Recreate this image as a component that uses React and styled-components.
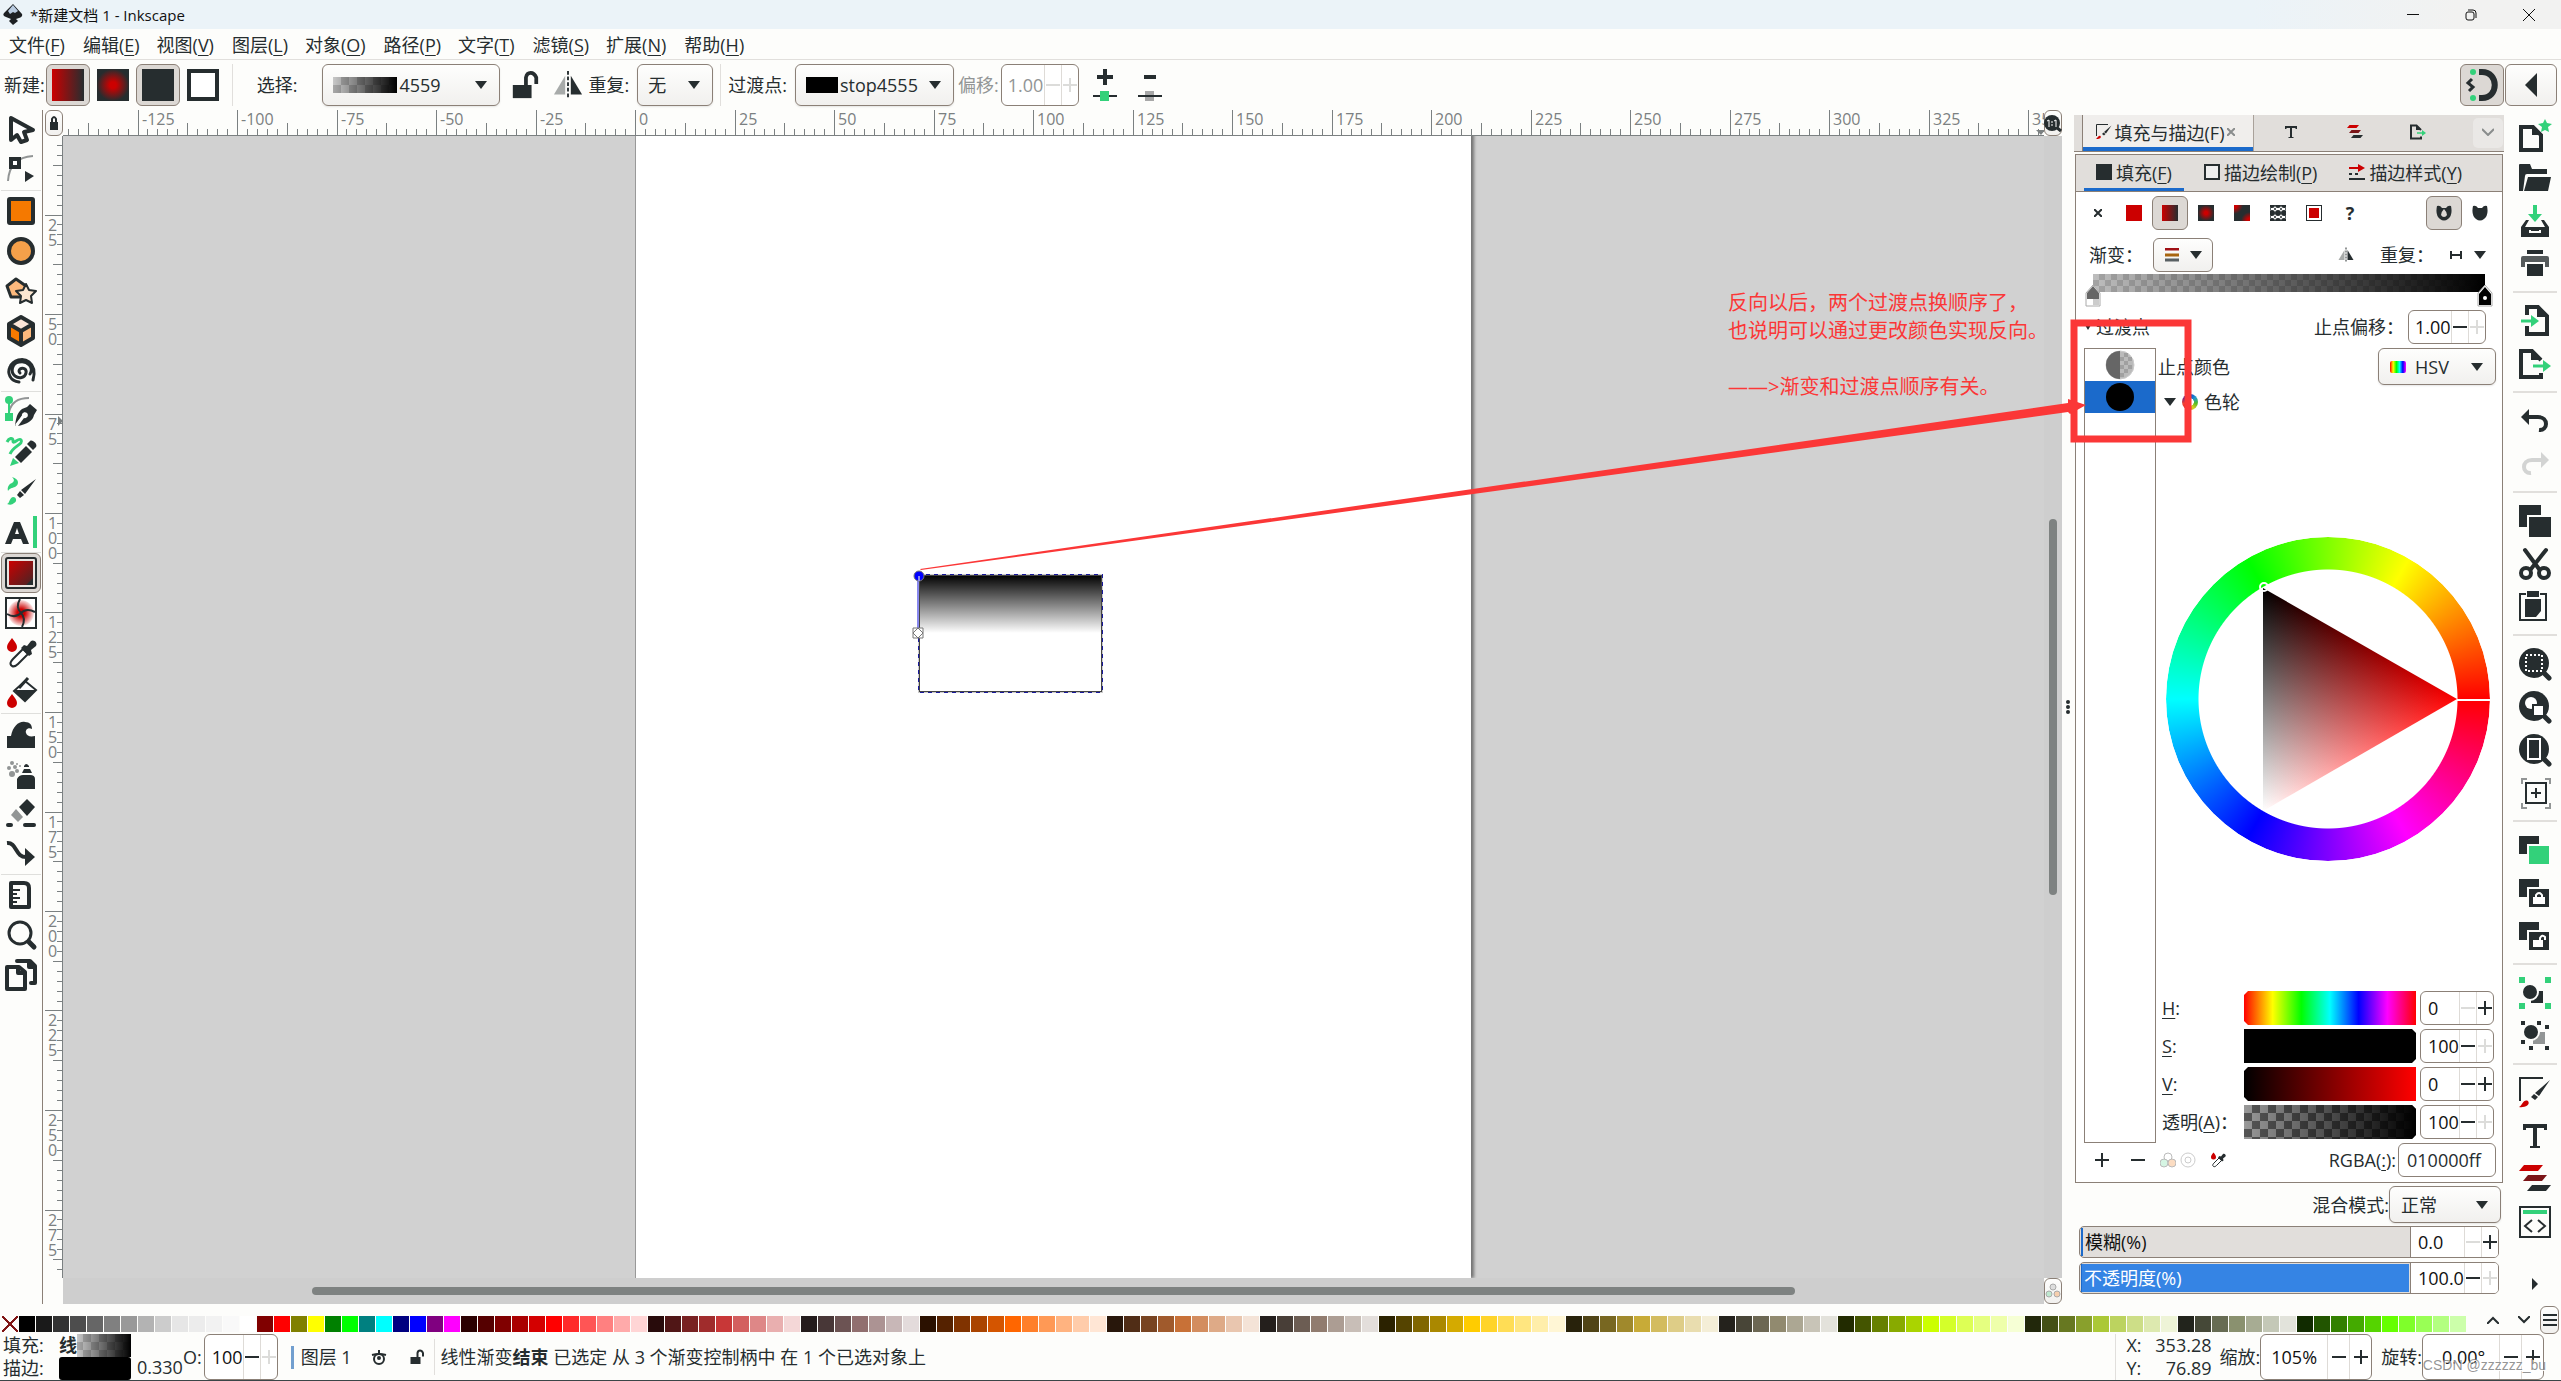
import React from 'react';
import styled, { createGlobalStyle } from 'styled-components';

const ink = '#262d2f';
const line = '#8b8077';
const soft = '#dedbd7';
const green = '#33d17a';
const red = '#cc0000';
const note = '#fb3737';
const blue = '#1b6acb';

const GlobalStyle = createGlobalStyle`
  * { box-sizing: border-box; }
  html, body { margin: 0; padding: 0; }
  body, button, input, select {
    font-family: "Open Sans", "Noto Sans CJK SC", sans-serif;
    font-size: 18px;
    color: ${ink};
  }
  body { background: #fdfdfb; line-height: 24px; overflow: hidden; }
  button { background: none; border: none; padding: 0; }
  u { text-underline-offset: 3px; }
  svg { display: block; flex: none; }
`;

const checker = (a, b, size) => `repeating-conic-gradient(${a} 0 25%, ${b} 0 50%) 0 0 / ${size}px ${size}px`;

/* ---------- icons ---------- */

const s = (w, extra) => ({ fill: 'none', stroke: ink, strokeWidth: w, ...extra });
const drop = <path d="M7 1c3 4 5 6 5 9a5 5 0 0 1-10 0c0-3 2-5 5-9z" fill={red} />;
const lens = (
  <>
    <circle cx="15" cy="15" r="15" fill={ink} />
    <path d="M24 24l6 6" {...s(5, { strokeLinecap: 'round' })} />
  </>
);
const copies = (fill) => (
  <>
    <path d="M0 2h20v8H8v10H0z" fill={ink} />
    <path d="M10 12h20v18H10z" fill={fill} />
  </>
);

const icons = {
  select: <path d="M6 4v22l6-5 4 7 6-2-3-8 9-2z" {...s(4, { fill: '#fff', strokeLinejoin: 'round' })} />,
  node: (
    <>
      <path d="M3 27C4 10 13 3 28 2" {...s(2, { stroke: '#929595' })} />
      <rect x="6" y="5" width="8" height="8" {...s(4, { fill: '#fff' })} />
      <path d="M20 17l9 5-9 6z" fill={ink} />
    </>
  ),
  rect: <rect x="4" y="4" width="24" height="24" rx="1" {...s(4, { fill: '#f57900', strokeLinejoin: 'round' })} />,
  circle: <circle cx="16" cy="16" r="12" {...s(4, { fill: '#f5a04a' })} />,
  star: (
    <>
      <path d="M11 4l10 7-4 11H6L2 11z" {...s(3, { fill: '#fcb97d', strokeLinejoin: 'round' })} />
      <path d="M21 9l3 6 7 1-5 5 1 7-6-3-6 3 1-7-5-5 7-1z" {...s(2, { fill: '#fce6d0', strokeLinejoin: 'round' })} />
    </>
  ),
  cube: (
    <>
      <path d="M16 2l12 7-12 7L4 9z" fill="#fce6d8" />
      <path d="M4 9l12 7v14L4 23z" fill="#f57900" />
      <path d="M28 9l-12 7v14l12-7z" fill="#fcb97d" />
      <path d="M16 2l12 7v14l-12 7-12-7V9zM4 9l12 7 12-7M16 16v14" {...s(4, { strokeLinejoin: 'round' })} />
    </>
  ),
  spiral: <path d="M15 18q-2-2 0-4c3-2 7 0 6 4-1 5-7 6-11 3C5 17 7 8 14 7c9-2 15 6 11 12M14 27C5 26 2 18 5 12 8 5 18 2 24 7c5 4 6 11 4 18" {...s(3, { strokeLinecap: 'round' })} />,
  pen: (
    <>
      <path d="M4 16C6 7 12 2 24 2" {...s(2, { stroke: '#929595' })} />
      <path d="M4 4v18" {...s(2, { stroke: green })} />
      <circle cx="4" cy="4" r="4" fill={green} />
      <rect y="17" width="8" height="8" fill={green} />
      <path fillRule="evenodd" d="M10 30c1-8 2-13 7-17l5-2 3-3 7 6-3 5c-1 6-7 9-16 11l6-8a3 3 0 1 0-2-2z" fill={ink} />
      <path d="M11 29l9-12" {...s(2, { stroke: '#fff' })} />
    </>
  ),
  pencil: (
    <>
      <path d="M2 6c2-4 6-5 6-1s6-4 8-1c3 4-8 6-11 14" {...s(3, { stroke: green })} />
      <path d="M10 21l11-11 6 6-11 11z" fill={ink} />
      <path d="M22 8l3-3c2-2 8 3 6 6l-3 3z" fill={ink} />
      <path d="M8 22l6 5-9 3z" fill={green} />
    </>
  ),
  brush: (
    <>
      <path d="M7 1c8 2 7 8 3 10-3 1-5 1-7 4-1-4 1-7 4-8 3-2 2-4 0-6z" fill={green} />
      <path d="M31 3L20 18l-4-4zM15 15l4 4-4 3-3-3z" fill={ink} />
      <path d="M2 28c3-1 2-6 6-7 4 0 4 5 1 6-2 2-4 2-7 1z" fill={green} />
    </>
  ),
  text: (
    <>
      <path fillRule="evenodd" d="M0 28L9 6h6l9 22h-6l-2-5H8l-2 5zm10-10h4l-2-6z" fill={ink} />
      <path d="M30 0v32" {...s(4, { stroke: green })} />
    </>
  ),
  gradient: (
    <>
      <rect x="1" y="1" width="30" height="30" rx="2" {...s(2, { fill: '#e8e4e0' })} />
      <rect x="4" y="4" width="24" height="24" fill="url(#diag)" />
    </>
  ),
  mesh: (
    <>
      <rect x="1" y="1" width="30" height="30" {...s(2, { fill: '#fff' })} />
      <circle cx="16" cy="16" r="13" fill="url(#meshglow)" />
      <path d="M15 2c-4 7-2 11 1 14s4 8 1 14M2 17c7 4 11 2 14-1s8-4 14-1" {...s(2)} />
    </>
  ),
  dropper: (
    <>
      {drop}
      <path d="M7 29c-3-2-1-5 1-7l10-10 5 5-10 10c-2 2-4 3-6 2z" {...s(2, { fill: '#fff' })} />
      <path d="M16 11l3-3 3 1 4-5c3-2 7 2 5 5l-5 4 1 4-3 2z" fill={ink} />
    </>
  ),
  bucket: (
    <>
      <g transform="translate(0 16)">{drop}</g>
      <path d="M20 4l11 9-11 11L9 14z" {...s(2, { fill: '#fff' })} />
      <path d="M9 13h22L20 24z" fill={ink} />
      <path d="M14 11L23 1" {...s(3)} />
    </>
  ),
  tweak: <path d="M2 30V18h4C8 8 14 3 20 4c5 0 7 3 7 7-4-2-7 1-6 4s4 4 9 3v12z" fill={ink} />,
  spray: (
    <>
      <path d="M12 31V21q2-4 6-4h7q5 0 5 4v10zM17 15l2-4h6l2 4zM19 8q2-4 5 0v1h-5z" fill={ink} />
      <g fill="#929595">
        <circle cx="7" cy="5" r="2" /><circle cx="4" cy="10" r="2" /><circle cx="7" cy="16" r="3" />
        <circle cx="12" cy="6" r="1" /><circle cx="10" cy="9" r="2" /><circle cx="12" cy="13" r="2" /><circle cx="15" cy="8" r="1" />
      </g>
    </>
  ),
  eraser: (
    <>
      <path d="M22 1l8 8-8 9-8-9z" fill={ink} />
      <path d="M11 11l7 8-5 5-7-7z" fill="#929595" />
      <path d="M3 27h3M20 27h9" {...s(4, { strokeLinecap: 'round' })} />
    </>
  ),
  connector: (
    <>
      <path d="M2 5c10-1 8 15 20 14" {...s(4)} />
      <path d="M20 10l10 9-10 9z" fill={ink} />
    </>
  ),
  measure: (
    <>
      <path d="M6 4h13q5 0 5 5v19H6z" {...s(4, { strokeLinejoin: 'round' })} />
      <path d="M8 11h7M8 15h4M8 19h7M8 23h4" {...s(2)} />
    </>
  ),
  zoom: (
    <>
      <circle cx="15" cy="14" r="11" {...s(3)} />
      <path d="M24 23l5 5" {...s(5, { strokeLinecap: 'round' })} />
    </>
  ),
  pages: <path d="M2 8h12l6 5v17H2zM13 8v6h7M12 2h13l5 5v17h-4M24 2v6h6" {...s(4, { strokeLinejoin: 'round', strokeLinecap: 'round' })} />,

  docNew: (
    <>
      <path d="M2 8h12l8 8v15H2z" {...s(4)} />
      <path d="M13 6v10h10z" fill={ink} />
      <path d="M26 0l2 4 5 1-4 3 1 5-4-2-4 2 1-5-4-3 5-1z" fill={green} />
    </>
  ),
  docOpen: <path d="M0 3q0-1 1-1h10l2 5h15v5H8q-2 0-2 2L4 29H0zM9 15h23l-3 14H5z" fill={ink} />,
  save: (
    <>
      <path d="M14 0h4v9h5l-7 8-7-8h5z" fill={green} />
      <path fillRule="evenodd" d="M2 32V22l5-7h3l-4 7h20l-4-7h3l5 7v10zm8-7v3h12v-3h-2v1h-8v-1z" fill={ink} />
    </>
  ),
  print: (
    <>
      <path d="M8 2h16v4H8zM8 16h16v12H8z" fill={ink} />
      <path d="M2 10q0-2 2-2h24q2 0 2 2v9h-4v-5H6v5H2z" fill="#555a5b" />
    </>
  ),
  docImport: (
    <>
      <path d="M8 10V2h11l9 9v18H8v-8" {...s(4)} />
      <path d="M18 2v10h10z" fill={ink} />
      <path d="M2 16h12" {...s(3, { stroke: green })} />
      <path d="M12 10l8 6-8 6z" fill={green} />
    </>
  ),
  docExport: (
    <>
      <path d="M22 12L13 3H2v26h20v-4" {...s(4)} />
      <path d="M12 2v10h11z" fill={ink} />
      <path d="M14 18h12" {...s(3, { stroke: green })} />
      <path d="M24 12l8 6-8 6z" fill={green} />
    </>
  ),
  undo: (
    <>
      <path d="M7 12h12c11 0 10 14 1 13" {...s(4)} />
      <path d="M10 4v16L2 12z" fill={ink} />
    </>
  ),
  redo: (
    <>
      <path d="M25 12H13C2 12 3 26 12 25" {...s(4, { stroke: '#d3d4d3' })} />
      <path d="M22 4v16l8-8z" fill="#d3d4d3" />
    </>
  ),
  copy: <path d="M0 0h22v10H8v12H0zM10 12h22v20H10z" fill={ink} />,
  cut: (
    <>
      <path d="M6 2l14 19M27 2L12 21" {...s(4, { strokeLinecap: 'round' })} />
      <circle cx="7" cy="25" r="5" {...s(4)} />
      <circle cx="25" cy="25" r="5" {...s(4)} />
    </>
  ),
  paste: <path fillRule="evenodd" d="M0 2h7v2H2v24h24V4h-5V2h7v28H0zM8 0h12v6H8zM6 8h16v12l-5 6H6z" fill={ink} />,
  zoomSelection: (
    <>
      {lens}
      <rect x="7" y="7" width="16" height="16" {...s(2, { stroke: '#fff', strokeDasharray: '2 2' })} />
    </>
  ),
  zoomDrawing: (
    <>
      {lens}
      <circle cx="12" cy="12" r="6" fill="#fff" />
      <rect x="13" y="13" width="12" height="12" fill={ink} />
      <rect x="15" y="15" width="9" height="9" fill="#fff" />
    </>
  ),
  zoomPage: (
    <>
      {lens}
      <rect x="9" y="5" width="12" height="20" {...s(2, { stroke: '#fff' })} />
    </>
  ),
  zoomCenter: (
    <>
      <path d="M3 7V2h5M26 2h5v5M31 26v5h-5M8 31H3v-5" {...s(2, { stroke: '#929595' })} />
      <rect x="7" y="6" width="20" height="20" {...s(2)} />
      <path d="M17 11v10M12 16h10" {...s(2)} />
    </>
  ),
  duplicate: copies(green),
  clone: (
    <>
      {copies(ink)}
      <path d="M14 20h12v7H14z" fill="#fff" />
      <path d="M17 21v-3q3-4 6 0v3" {...s(2, { stroke: '#fff' })} />
    </>
  ),
  unlink: (
    <>
      {copies(ink)}
      <path d="M14 20h10v7H14z" fill="#fff" />
      <path d="M21 21v-3q2-4 5-1v3" {...s(2, { stroke: '#fff' })} />
    </>
  ),
  group: (
    <>
      <path d="M0 0h6v6H0zM26 0h6v6h-6zM0 26h6v6H0zM26 26h6v6h-6z" fill={green} />
      <path d="M12 14h12v12H12z" fill={ink} />
      <circle cx="11" cy="15" r="8" fill={ink} stroke="#fdfdfb" strokeWidth="2" />
    </>
  ),
  ungroup: (
    <>
      <path d="M2 1h4v4H2zM18 1h4v4h-4zM26 5h4v4h-4zM2 20h4v4H2zM10 26h4v4h-4zM26 26h4v4h-4z" fill={ink} />
      <path d="M14 12h12v12H14z" fill="#929595" />
      <circle cx="12" cy="12" r="8" fill={ink} stroke="#fdfdfb" strokeWidth="2" />
    </>
  ),
  fillStroke: (
    <>
      <path d="M1 24V1h23" {...s(2)} />
      <path d="M31 3L20 19l-4-3zM15 17l4 3-3 3-4-3z" fill={ink} />
      <path d="M0 30c4-2 4-8 9-6 3 4-4 7-9 6z" fill={red} />
    </>
  ),
  fonts: <path d="M4 4h24v6h-3V8h-7v18h3v2H11v-2h3V8H7v2H4z" fill={ink} />,
  align: (
    <>
      <path d="M5 2h19l-5 6H0z" fill={red} />
      <path d="M9 12h19l-5 6H4z" fill="#7b1518" />
      <path d="M13 22h19l-5 6H8z" fill={ink} />
    </>
  ),
  xml: (
    <>
      <rect x="1" y="1" width="30" height="30" {...s(2)} />
      <path d="M4 4h24v4H4z" fill={green} />
      <path d="M13 14l-7 6 7 6M19 14l7 6-7 6" {...s(2)} />
    </>
  ),
  magnet: (
    <>
      <path d="M13 3h3c17 0 17 26 0 26h-3" {...s(6)} />
      <circle cx="7" cy="3" r="3" fill={green} />
      <circle cx="7" cy="29" r="3" fill={green} />
      <path d="M6 10l-4 4 5 4-4 4" {...s(3)} />
    </>
  ),
  stopAdd: (
    <>
      <path d="M16 0v16M8 8h16" {...s(4)} />
      <path d="M4 27h24" {...s(2)} />
      <path d="M11 22h9v10h-9z" fill={green} />
    </>
  ),
  stopRemove: (
    <>
      <path d="M10 8h12" {...s(4)} />
      <path d="M11 22h9v10h-9z" fill="#a8a8a8" />
      <path d="M4 27h24" {...s(2)} />
    </>
  ),
  unlocked: (
    <>
      <path d="M3 16h20v14H3z" fill={ink} />
      <path d="M17 16V8q1-5 5-5t6 5v7" {...s(4)} />
    </>
  ),
  flip: (
    <>
      <path d="M13 6v20H1z" fill="#a8abaa" />
      <path d="M19 6v20h12z" fill={ink} />
      <path d="M16 1v30" {...s(2, { strokeDasharray: '4 2' })} />
    </>
  ),
};

const Icon = ({ name, size = 32 }) => (
  <svg width={size} height={size} viewBox="0 0 32 32" overflow="visible" aria-hidden="true">{icons[name]}</svg>
);

const Arrow = () => (
  <svg width="12" height="8" viewBox="0 0 12 8" aria-hidden="true"><path d="M0 0h12L6 8z" fill={ink} /></svg>
);

/* ---------- shared controls ---------- */

const Swatch = styled.span`
  flex: none;
  width: ${p => p.$w}px;
  height: ${p => p.$h}px;
  background: ${p => p.$bg};
  border: ${p => p.$border || 'none'};
  border-radius: ${p => p.$radius || 0};
`;

const SelectBox = styled.span`
  display: flex;
  align-items: center;
  flex: none;
  width: ${p => p.$w}px;
  height: ${p => p.$h || 42}px;
  padding: 0 12px 0 ${p => p.$pad || 10}px;
  gap: ${p => p.$gap || 2}px;
  border: 1px solid ${line};
  border-radius: 6px;
  background: linear-gradient(#fefefd, #f1f0ee);
  box-shadow: 0 1px 2px rgba(0, 0, 0, 0.1);

  select {
    flex: 1;
    min-width: 0;
    height: 26px;
    padding: 0;
    appearance: none;
    border: none;
    background: none;
  }
`;

const Choice = ({ id, label, value, w, h, pad, gap, children }) => (
  <SelectBox $w={w} $h={h} $pad={pad} $gap={gap}>
    {children}
    <select id={id} aria-label={label} defaultValue={value}>
      <option>{value}</option>
    </select>
    <Arrow />
  </SelectBox>
);

const SpinBox = styled.span`
  display: flex;
  flex: none;
  width: ${p => p.$w}px;
  height: ${p => p.$h || 34}px;
  border: ${p => (p.$bare ? 'none' : `1px solid ${line}`)};
  border-left: ${p => (p.$bare ? `1px solid ${line}` : '')};
  border-radius: ${p => (p.$bare ? 0 : 6)}px;
  background: #fff;

  input {
    flex: 1;
    min-width: 0;
    width: 0;
    padding: 0 0 0 ${p => p.$pad || 6}px;
    border: none;
    background: none;
    color: ${p => (p.$off ? '#929595' : '#111')};
  }
`;

const Step = styled.button`
  flex: none;
  width: ${p => p.$w || 17}px;
  border-left: 1px solid ${soft};
  display: flex;
  align-items: center;
  justify-content: center;
`;

const Spin = ({ id, label, value, w, h, pad, step, off, low, high, bare }) => (
  <SpinBox $w={w} $h={h} $pad={pad} $off={off} $bare={bare}>
    <input id={id} aria-label={label} defaultValue={value} disabled={off} />
    <Step $w={step} aria-label="减少">
      <svg width="14" height="14"><path d="M0 7h14" stroke={off || low ? '#dcdcda' : ink} strokeWidth="2" /></svg>
    </Step>
    <Step $w={step} aria-label="增加">
      <svg width="14" height="14"><path d="M0 7h14M7 0v14" stroke={off || high ? '#dcdcda' : ink} strokeWidth="2" /></svg>
    </Step>
  </SpinBox>
);

const Tool = styled.button`
  flex: none;
  display: flex;
  align-items: center;
  justify-content: center;
  width: ${p => p.$w}px;
  height: ${p => p.$h}px;
  border: 1px solid ${p => (p.$on || p.$framed ? line : 'transparent')};
  border-radius: 6px;
  background: ${p => (p.$on ? '#dcd8d4' : p.$framed ? 'linear-gradient(#fefefd, #f1f0ee)' : 'none')};
`;

const Spacer = styled.span`
  flex: 1;
`;

const Gap = styled.span`
  flex: none;
  width: ${p => p.$w}px;
`;

const VLine = styled.span`
  flex: none;
  align-self: stretch;
  width: 1px;
  margin: ${p => p.$m || '4px 0'};
  background: #e1dfdc;
`;

/* ---------- window frame ---------- */

const Window = styled.div`
  position: relative;
  display: flex;
  flex-direction: column;
  min-height: 100vh;
  border-bottom: 1px solid #3a4547;
`;

const TitleBar = styled.header`
  display: flex;
  align-items: center;
  height: 29px;
  padding: 0 3px;
  background: linear-gradient(90deg, #ebf3f8, #ebf3f8 88%, #f2f2f1 96%);
  font-size: 15px;
  color: #111;
`;

const WindowButton = styled.button`
  width: 58px;
  height: 29px;
  display: flex;
  align-items: center;
  justify-content: center;
`;

const MenuBar = styled.nav`
  display: flex;
  height: 31px;
  padding-left: 1px;
  border-bottom: 1px solid #e1dfdc;

  button {
    padding: 0 9px 0 8px;
    white-space: nowrap;
  }

  button:nth-child(even) {
    padding-left: 9px;
  }
`;

const ToolControls = styled.div`
  display: flex;
  align-items: center;
  height: 50px;
  padding: 0 4px;
  white-space: nowrap;

  label[data-off='true'] {
    color: #929595;
  }
`;

const Main = styled.div`
  display: flex;
  flex: 1;
  min-height: 0;
`;

const menus = [
  ['文件', 'F'], ['编辑', 'E'], ['视图', 'V'], ['图层', 'L'], ['对象', 'O'],
  ['路径', 'P'], ['文字', 'T'], ['滤镜', 'S'], ['扩展', 'N'], ['帮助', 'H'],
];

const Title = () => (
  <TitleBar>
    <svg width="20" height="22" viewBox="0 0 20 22" aria-hidden="true">
      <path d="M10 0l9 10q1 3-3 4l-3 1 2 2-5 4-4-4 2-2-5-2q-4-1-2-4z" fill="#1d2023" />
      <path d="M10 1l5 6-3 2-2-1-3 2-2-3z" fill="#b9cbe0" />
    </svg>
    <Gap $w={7} />
    *新建文档 1 - Inkscape
    <Spacer />
    <WindowButton aria-label="最小化">
      <svg width="12" height="12"><path d="M0 5h12v1H0z" fill="#111" /></svg>
    </WindowButton>
    <WindowButton aria-label="还原">
      <svg width="12" height="12" fill="none" stroke="#111"><rect x="1" y="3" width="8" height="8" rx="2" /><path d="M3 1h5q3 0 3 3v5" /></svg>
    </WindowButton>
    <WindowButton aria-label="关闭">
      <svg width="12" height="12"><path d="M0 0l12 12M12 0L0 12" stroke="#111" /></svg>
    </WindowButton>
  </TitleBar>
);

const thinChecker = checker('#a8a8a8', '#c8c8c8', 16);

const Controls = () => (
  <ToolControls>
    <span>新建:</span>
    <Gap $w={1} />
    <Tool $w={44} $h={42} $on aria-label="线性渐变"><Swatch $w={32} $h={32} $bg={`linear-gradient(90deg, ${red}, ${ink})`} /></Tool>
    <Gap $w={1} />
    <Tool $w={44} $h={42} aria-label="径向渐变"><Swatch $w={32} $h={32} $bg={`radial-gradient(closest-side, ${red} 20%, ${ink})`} /></Tool>
    <Gap $w={1} />
    <Tool $w={44} $h={42} $on aria-label="填充"><Swatch $w={32} $h={32} $bg={ink} /></Tool>
    <Gap $w={1} />
    <Tool $w={44} $h={42} aria-label="描边"><Swatch $w={32} $h={32} $bg="#fff" $border={`4px solid ${ink}`} /></Tool>
    <Gap $w={7} />
    <VLine />
    <Gap $w={24} />
    <label htmlFor="grad">选择:</label>
    <Gap $w={25} />
    <Choice id="grad" value="4559" w={178}>
      <Swatch $w={64} $h={16} $bg={`linear-gradient(90deg, transparent, #000), ${thinChecker}`} />
    </Choice>
    <Gap $w={10} />
    <Tool $w={30} $h={42} aria-label="锁定"><Icon name="unlocked" size={30} /></Tool>
    <Gap $w={12} />
    <Tool $w={32} $h={42} aria-label="反向"><Icon name="flip" size={30} /></Tool>
    <Gap $w={4} />
    <label htmlFor="repeat">重复:</label>
    <Gap $w={8} />
    <Choice id="repeat" value="无" w={76} />
    <Gap $w={7} />
    <VLine />
    <Gap $w={7} />
    <label htmlFor="stops">过渡点:</label>
    <Gap $w={8} />
    <Choice id="stops" value="stop4555" w={159}>
      <Swatch $w={32} $h={16} $bg="#000" />
    </Choice>
    <Gap $w={4} />
    <label htmlFor="offset" data-off="true">偏移:</label>
    <Gap $w={2} />
    <Spin id="offset" value="1.00" w={78} h={42} off />
    <Gap $w={7} />
    <Tool $w={38} $h={42} aria-label="插入过渡点"><Icon name="stopAdd" /></Tool>
    <Gap $w={7} />
    <Tool $w={38} $h={42} aria-label="删除过渡点"><Icon name="stopRemove" /></Tool>
    <Spacer />
    <Tool $w={44} $h={42} $on aria-label="吸附"><Icon name="magnet" /></Tool>
    <Gap $w={1} />
    <Tool $w={52} $h={42} $framed aria-label="收起">
      <svg width="12" height="24"><path d="M12 0v24L0 12z" fill={ink} /></svg>
    </Tool>
  </ToolControls>
);

/* ---------- toolbox and command bar ---------- */

const Toolbox = styled.aside`
  flex: none;
  width: 43px;
  padding: 0 1px;
  border-right: 1px solid ${line};
`;

const Rule = styled.hr`
  height: 1px;
  margin: 0;
  border: none;
  background: #dfdfdc;
`;

const toolGroups = [
  ['select', 'node'],
  ['rect', 'circle', 'star', 'cube', 'spiral'],
  ['pen', 'pencil', 'brush', 'text'],
  ['gradient', 'mesh', 'dropper', 'bucket'],
  ['tweak', 'spray', 'eraser', 'connector'],
  ['measure', 'zoom', 'pages'],
];

const Commands = styled.aside`
  flex: none;
  width: 57px;
  display: flex;
  flex-direction: column;
  padding: 3px 4px 12px 9px;
`;

const commandGroups = [
  ['docNew', 'docOpen', 'save', 'print'],
  ['docImport', 'docExport'],
  ['undo', 'redo'],
  ['copy', 'cut', 'paste'],
  ['zoomSelection', 'zoomDrawing', 'zoomPage', 'zoomCenter'],
  ['duplicate', 'clone', 'unlink'],
  ['group', 'ungroup'],
  ['fillStroke', 'fonts', 'align', 'xml'],
];

const CommandRule = styled.hr`
  flex: none;
  width: 100%;
  height: 2px;
  margin: 6px 0;
  border: none;
  background: #e1dfdc;
`;

/* ---------- canvas ---------- */

const CanvasArea = styled.main`
  flex: 1;
  min-width: 0;
  margin-left: 2px;
  display: grid;
  grid-template-columns: 18px 1fr 18px;
  grid-template-rows: 26px 1fr 26px;
`;

const CornerButton = styled.button`
  display: flex;
  align-items: center;
  justify-content: center;
  border: 1px solid ${line};
  border-radius: 6px;
  background: linear-gradient(#fefefd, #f1f0ee);
`;

const RulerBox = styled.div`
  overflow-x: clip;
  overflow-y: visible;
  min-height: 0;

  svg { font-size: 16px; fill: #7b8081; overflow: visible; }
`;

const Desk = styled.div`
  position: relative;
  overflow: hidden;
  background: #d1d1d1;
`;

const Page = styled.div`
  position: absolute;
  left: 572px;
  top: -21px;
  width: 836px;
  bottom: 0;
  background: #fff;
  border-left: 1px solid #999;
  box-shadow: 3px 0 3px rgba(0, 0, 0, 0.45);
`;

const Shape = styled.svg`
  position: absolute;
  left: 849px;
  top: 432px;
`;

const Remark = styled.p`
  position: absolute;
  right: 8px;
  top: 153px;
  width: 308px;
  margin: 0;
  font-size: 20px;
  line-height: 28px;
  color: ${note};
  white-space: pre;
`;

const Track = styled.div`
  display: flex;
  flex-direction: ${p => (p.$down ? 'column' : 'row')};
  align-items: center;
  background: #cecece;
`;

const Thumb = styled.div`
  flex: ${p => p.$size} 0 0;
  align-self: center;
  width: ${p => (p.$down ? '8px' : 'auto')};
  height: ${p => (p.$down ? 'auto' : '8px')};
  border-radius: 4px;
  background: #7e8281;
`;

const Rest = styled.div`
  flex: ${p => p.$size} 0 0;
`;

const STEP = 9.95;

const HRuler = () => {
  const ticks = [];
  for (let i = -57; i < 142; i++) ticks.push(i);
  return (
    <RulerBox>
      <svg width="1981" height="26">
        {ticks.map(i => {
          const x = Math.round(572 + i * STEP);
          const h = i % 10 === 0 ? 26 : i % 5 === 0 ? 13 : 7;
          return <rect key={i} x={x} y={26 - h} width="1" height={h} />;
        })}
        {ticks.filter(i => i % 10 === 0).map(i => (
          <text key={i} x={Math.round(572 + i * STEP) + 4} y="15">{i * 2.5}</text>
        ))}
        <rect y="25" width="1981" height="1" />
        <path d="M1973 20h9l-4 5z" />
      </svg>
    </RulerBox>
  );
};

const VRuler = () => {
  const ticks = [];
  for (let i = 3; i < 117; i++) ticks.push(i);
  return (
    <RulerBox>
      <svg width="18" height="1142">
        {ticks.map(i => {
          const y = Math.round(i * STEP - 21);
          const w = i % 10 === 0 ? 18 : i % 5 === 0 ? 10 : 6;
          return <rect key={i} x={18 - w} y={y} width={w} height="1" />;
        })}
        {ticks.filter(i => i % 10 === 0).map(i => (
          <text key={i}>
            {String(i * 2.5).split('').map((c, n) => (
              <tspan key={n} x="3" y={Math.round(i * STEP - 21) + 16 + n * 15}>{c}</tspan>
            ))}
          </text>
        ))}
        <rect x="17" width="1" height="1142" />
        <path d="M13 280l5 5-5 5z" />
      </svg>
    </RulerBox>
  );
};

const Canvas = () => (
  <CanvasArea>
    <CornerButton aria-label="锁定参考线">
      <svg width="8" height="14" viewBox="0 0 8 14"><path d="M0 6h8v8H0z" fill={ink} /><path d="M2 7V3q2-4 4 0v4" fill="none" stroke={ink} strokeWidth="2" /></svg>
    </CornerButton>
    <HRuler />
    <CornerButton aria-label="缩放 1:1">
      <svg width="16" height="16" viewBox="0 0 16 16" overflow="visible">
        <circle cx="7" cy="8" r="8" fill={ink} />
        <path d="M11 12l5 4" stroke={ink} strokeWidth="3" />
        <path d="M2 6l2-1v7M9 6l2-1v7M7 6v2M7 9v2" fill="none" stroke="#fff" />
      </svg>
    </CornerButton>
    <VRuler />
    <Desk>
      <Page />
      <Shape width="200" height="136" viewBox="0 0 200 136" shapeRendering="crispEdges">
        <rect x="7" y="7" width="182" height="116" fill="url(#fade)" stroke="#444" />
        <path d="M6 6h184v118H6z" fill="none" stroke="#ccc" />
        <path d="M6 6h184v118H6z" fill="none" stroke="#1a1a9c" strokeDasharray="4 4" />
        <path d="M6 8v56" stroke="#8888ee" strokeWidth="2" />
        <g shapeRendering="auto">
          <circle cx="7" cy="8" r="5" fill="#00f" stroke="#777" />
          <path d="M7 8v5" stroke="#8888ee" strokeWidth="2" />
          <path d="M1 60h10v10H1zM6 60l5 5-5 5-5-5z" fill="#fff" stroke="#777" />
        </g>
      </Shape>
      <Remark>{'反向以后，两个过渡点换顺序了，\n也说明可以通过更改颜色实现反向。\n\n——>渐变和过渡点顺序有关。'}</Remark>
    </Desk>
    <Track $down>
      <Rest $size={383} />
      <Thumb $down $size={376} />
      <Rest $size={383} />
    </Track>
    <span />
    <Track>
      <Rest $size={249} />
      <Thumb $size={1482} />
      <Rest $size={249} />
    </Track>
    <CornerButton aria-label="色彩管理">
      <svg width="16" height="16" fill="#ddd" stroke="#aaa"><circle cx="8" cy="4" r="3" /><circle cx="4" cy="11" r="3" fill="#bfe8cf" /><circle cx="12" cy="11" r="3" fill="#f6cfae" /></svg>
    </CornerButton>
  </CanvasArea>
);

/* ---------- dock ---------- */

const Grip = styled.div`
  flex: none;
  width: 12px;
  display: flex;
  align-items: center;
  justify-content: center;
`;

const Dock = styled.section`
  flex: none;
  width: 430px;
  display: flex;
  flex-direction: column;
  padding: 5px 0 10px;
`;

const DockTabs = styled.div`
  display: flex;
  height: 37px;
  padding-left: 8px;
  background: #e1dedb;
  border-bottom: 1px solid ${line};
`;

const DockTab = styled.button`
  display: flex;
  align-items: center;
  justify-content: center;
  gap: 3px;
  width: ${p => p.$w}px;
  padding-bottom: 2px;
  ${p => p.$on && `
    background: #f0eeec;
    border-left: 1px solid ${line};
    border-right: 1px solid #a9a19a;
    box-shadow: inset 0 -4px ${blue};
  `}
  ${p => p.$pale && `
    height: 30px;
    margin: 3px 1px 0 0;
    border-radius: 5px;
    background: #eae8e6;
  `}
`;

const Panel = styled.div`
  flex: 1;
  display: flex;
  flex-direction: column;
  margin: 2px 1px 0;
  padding-bottom: 5px;
  border: 1px solid ${line};
  background: #fff;
`;

const SubTabs = styled.div`
  display: flex;
  gap: 8px;
  height: 37px;
  padding-left: 8px;
  background: #e1dedb;
  border-bottom: 1px solid ${line};
`;

const SubTab = styled.button`
  display: flex;
  align-items: center;
  gap: 4px;
  padding: 0 12px 2px;
  white-space: nowrap;
  box-shadow: ${p => (p.$on ? `inset 0 -3px ${blue}` : 'none')};
`;

const Row = styled.div`
  display: flex;
  align-items: center;
  flex: none;
  height: ${p => p.$h || 34}px;
  margin-top: ${p => p.$mt || 0}px;
  padding: ${p => p.$pad || 0};
  white-space: nowrap;
`;

const GradientBar = styled.div`
  position: relative;
  flex: none;
  height: 18px;
  margin: 2px 17px 18px;
  background: linear-gradient(90deg, rgba(128, 128, 128, 0.15), #000), ${checker('#aaa', '#c8c8c8', 12)};
`;

const StopHandle = styled.svg`
  position: absolute;
  top: 10px;
  left: ${p => p.$at};
  margin-left: -8px;
`;

const Editor = styled.div`
  flex: 1;
  display: grid;
  grid-template-columns: 72px 1fr;
  gap: 2px;
  margin-top: 4px;
  padding: 0 6px 0 8px;
`;

const StopList = styled.ul`
  margin: 0;
  padding: 0;
  list-style: none;
  border: 1px solid ${line};
`;

const Stop = styled.li`
  display: flex;
  align-items: center;
  justify-content: center;
  height: 32px;
  background: ${p => (p.$on ? blue : 'none')};
`;

const Column = styled.div`
  display: flex;
  flex-direction: column;
`;

const WheelArea = styled.div`
  flex: 1;
  display: flex;
  align-items: center;
  justify-content: center;
  padding-left: 2px;
`;

/* the mask puts the ring in its own stacking context, so the svg needs one too */
const Wheel = styled.div`
  display: grid;
  width: 324px;
  height: 324px;

  > * { grid-area: 1 / 1; }
  > svg { z-index: 1; }
`;

const Ring = styled.div`
  border-radius: 50%;
  background: conic-gradient(from 90deg, red, magenta, blue, cyan, lime, yellow, red);
  mask: radial-gradient(closest-side, transparent 129px, #000 130px);
`;

const Triangle = styled.g`
  isolation: isolate;

  rect + rect { mix-blend-mode: plus-lighter; }
`;

const Sliders = styled.div`
  display: grid;
  grid-template-columns: 82px 1fr 74px;
  gap: 4px;
  align-items: center;
  margin: 10px 2px 4px 0;
  white-space: nowrap;

  label { padding-left: 4px; }
`;

const Slider = styled.input`
  width: 100%;
  height: 34px;
  margin: 0;
  appearance: none;
  background: ${p => p.$bg};
  clip-path: ${p => (p.$end
    ? 'polygon(0 0, calc(100% - 4px) 0, 100% 4px, 100% 30px, calc(100% - 4px) 100%, 0 100%)'
    : 'polygon(4px 0, 100% 0, 100% 100%, 4px 100%, 0 30px, 0 4px)')};

  &::-webkit-slider-thumb {
    appearance: none;
    width: 1px;
    height: 34px;
  }
`;

const Entry = styled.input`
  width: 98px;
  height: 34px;
  padding: 0 0 0 8px;
  border: 1px solid ${line};
  border-radius: 6px;
  background: #fff;
`;

const Scale = styled.div`
  display: flex;
  height: 32px;
  margin: ${p => p.$mt}px 5px 0;
  border: 1px solid ${line};
  border-radius: 5px;
  background: #e1dedb;
  overflow: hidden;

  label {
    flex: 1;
    display: flex;
    align-items: center;
    margin: 1px;
    padding-left: 2px;
    border-left: ${p => (p.$full ? 1 : 2)}px solid ${blue};
    background: ${p => (p.$full ? '#3584e4' : 'none')};
    color: ${p => (p.$full ? '#fff' : '#111')};
  }
`;

const sliders = [
  { id: 'hue', label: <><u>H</u>:</>, bg: 'linear-gradient(90deg, red, yellow, lime, cyan, blue, magenta, red)', value: '0', low: true },
  { id: 'sat', label: <><u>S</u>:</>, bg: '#000', value: '100', high: true, end: true },
  { id: 'val', label: <><u>V</u>:</>, bg: 'linear-gradient(90deg, #000, red)', value: '0' },
  { id: 'alpha', label: <>透明(<u>A</u>)：</>, bg: `linear-gradient(90deg, transparent, #000), ${checker('#555', '#999', 16)}`, value: '100', high: true, end: true },
];

const PaintRow = () => (
  <Row $mt={4} $pad="0 4px">
    <Tool $w={36} $h={34} aria-label="无填充"><svg width="8" height="8"><path d="M0 0l8 8M8 0L0 8" stroke={ink} strokeWidth="2" /></svg></Tool>
    <Tool $w={36} $h={34} aria-label="单色"><Swatch $w={16} $h={16} $bg={red} /></Tool>
    <Tool $w={36} $h={34} $on aria-label="线性渐变"><Swatch $w={16} $h={16} $bg={`linear-gradient(90deg, ${red}, ${ink})`} /></Tool>
    <Tool $w={36} $h={34} aria-label="径向渐变"><Swatch $w={16} $h={16} $bg={`radial-gradient(closest-side, ${red} 20%, ${ink})`} /></Tool>
    <Tool $w={36} $h={34} aria-label="网格渐变"><Swatch $w={16} $h={16} $bg={`radial-gradient(circle at 0 0, ${red} 3px, transparent 9px), radial-gradient(circle at 100% 100%, ${red} 3px, transparent 9px), ${ink}`} /></Tool>
    <Tool $w={36} $h={34} aria-label="图案">
      <svg width="16" height="16" fill={ink}>
        {[0, 8, 16].map(y => [2, 8, 14].map(x => <circle key={`${x}-${y}`} cx={x} cy={y} r="3" />))}
        {[4, 12].map(y => [0, 5, 11, 16].map(x => <circle key={`${x}-${y}`} cx={x} cy={y} r="1" />))}
      </svg>
    </Tool>
    <Tool $w={36} $h={34} aria-label="色板">
      <svg width="16" height="16"><path d="M0 0h16v16H0z" fill={ink} /><path d="M1 1h14v14H1z" fill="#fff" /><path d="M3 3h10v10H3z" fill={red} /></svg>
    </Tool>
    <Tool $w={36} $h={34} aria-label="未设置"><b>?</b></Tool>
    <Spacer />
    <Tool $w={36} $h={34} $on aria-label="奇偶填充">
      <svg width="16" height="16"><path fillRule="evenodd" d="M1 1q3-1 5 2h4q2-3 5-2 2 9-3 13-4 3-8 0Q-1 10 1 1zM8 4q-3 3-3 6 1 2 3 2t3-2q0-3-3-6z" fill={ink} /></svg>
    </Tool>
    <Tool $w={36} $h={34} aria-label="非零填充">
      <svg width="16" height="16"><path d="M1 1q3-1 5 2h4q2-3 5-2 2 9-3 13-4 3-8 0Q-1 10 1 1z" fill={ink} /></svg>
    </Tool>
  </Row>
);

const FillPanel = () => (
  <Panel>
    <SubTabs>
      <SubTab $on><Swatch $w={16} $h={16} $bg={ink} /><span>填充(<u>F</u>)</span></SubTab>
      <SubTab><Swatch $w={16} $h={16} $bg="#eee" $border={`2px solid ${ink}`} /><span>描边绘制(<u>P</u>)</span></SubTab>
      <SubTab>
        <svg width="16" height="16"><path d="M0 4h10" stroke={red} strokeWidth="2" /><path d="M9 0l7 4-7 4z" fill={red} /><path d="M0 10h3M6 10h3M0 15h16" stroke={ink} strokeWidth="2" /></svg>
        <span>描边样式(<u>Y</u>)</span>
      </SubTab>
    </SubTabs>
    <PaintRow />
    <Row $mt={8} $pad="0 16px 0 13px">
      <span>渐变：</span>
      <Gap $w={10} />
      <Tool $w={60} $h={34} $framed aria-label="渐变列表">
        <svg width="14" height="14"><path d="M0 1h14" stroke="#a01015" strokeWidth="3" /><path d="M0 7h14" stroke="#a8650f" strokeWidth="3" /><path d="M0 12h14" stroke="#596063" strokeWidth="3" /></svg>
        <Gap $w={11} />
        <Arrow />
      </Tool>
      <Spacer />
      <Icon name="flip" size={16} />
      <Gap $w={26} />
      <span>重复：</span>
      <Gap $w={16} />
      <svg width="12" height="8"><path d="M1 0v8M11 0v8M1 4h10" stroke={ink} strokeWidth="2" /></svg>
      <Gap $w={12} />
      <Arrow />
    </Row>
    <GradientBar>
      <StopHandle $at="0px" width="16" height="23" viewBox="0 0 16 23">
        <path d="M8 1l7 8v13H1V9z" fill="#fff" stroke="#aaa" />
        <path d="M8 2l6 7v6H2V9z" fill="#666" />
        <path d="M8 15h6v6H8z" fill="#ccc" />
      </StopHandle>
      <StopHandle $at="100%" width="16" height="23" viewBox="0 0 16 23">
        <path d="M8 1l7 8v13H1V9z" fill="#fff" stroke="#aaa" />
        <path d="M8 3l6 7v11H2V10z" fill="#000" />
        <circle cx="8" cy="14" r="2" fill="#fff" />
      </StopHandle>
    </GradientBar>
    <Row $pad="0 16px 0 9px">
      <svg width="6" height="5"><path d="M0 0h6L3 5z" fill={ink} /></svg>
      <Gap $w={5} />
      <span>过渡点</span>
      <Spacer />
      <label htmlFor="stop-offset">止点偏移：</label>
      <Gap $w={4} />
      <Spin id="stop-offset" value="1.00" w={78} high />
    </Row>
    <Editor>
      <StopList>
        <Stop>
          <svg width="30" height="30"><circle cx="15" cy="15" r="14" fill="#bbb" stroke="#ccc" /><path d="M15 1a14 14 0 0 0 0 28z" fill="#666" /><path d="M19 3h4v4h-4zM15 7h4v4h-4zM23 7h4v4h-4zM19 11h4v4h-4zM15 15h4v4h-4zM23 15h4v4h-4zM19 19h4v4h-4zM15 23h4v4h-4z" fill="#a0a0a0" /></svg>
        </Stop>
        <Stop $on><Swatch $w={28} $h={28} $bg="#000" $radius="50%" /></Stop>
      </StopList>
      <Column>
        <Row $h={37}>
          <span>止点颜色</span>
          <Spacer />
          <Choice label="颜色模式" value="HSV" w={118} h={37} pad={11} gap={9}>
            <Swatch $w={16} $h={12} $radius="2px" $bg="linear-gradient(90deg, red, yellow, lime, cyan, blue, magenta)" />
          </Choice>
        </Row>
        <Row $h={30} $mt={2} $pad="0 0 0 6px">
          <Arrow />
          <Gap $w={6} />
          <Swatch $w={16} $h={16} $radius="50%" $bg="radial-gradient(closest-side, #fff 45%, transparent 50%), conic-gradient(#14c, #29c, #5b2, #dc2, #d22, #e43, #628, #14c)" />
          <Gap $w={6} />
          <span>色轮</span>
        </Row>
        <WheelArea>
          <Wheel>
            <Ring />
            <svg width="324" height="324">
              <clipPath id="tri"><path d="M97 51l194 111L97 274z" /></clipPath>
              <g clipPath="url(#tri)">
                <Triangle>
                  <rect x="90" y="40" width="210" height="240" fill="url(#triRed)" />
                  <rect x="90" y="40" width="210" height="240" fill="url(#triWhite)" />
                </Triangle>
              </g>
              <circle cx="98" cy="50" r="4" fill="none" stroke="#fff" strokeWidth="2" />
              <path d="M291 163h33" stroke="#fff" strokeWidth="2" />
            </svg>
          </Wheel>
        </WheelArea>
        <Sliders>
          {sliders.map(r => (
            <React.Fragment key={r.id}>
              <label htmlFor={r.id}>{r.label}</label>
              <Slider type="range" id={r.id} $bg={r.bg} $end={r.end} defaultValue={r.value} />
              <Spin label={r.id} value={r.value} w={74} pad={7} low={r.low} high={r.high} />
            </React.Fragment>
          ))}
        </Sliders>
      </Column>
    </Editor>
    <Row $pad="0 6px 0 19px">
      <Tool $w={14} $h={30} aria-label="添加过渡点"><svg width="14" height="14"><path d="M0 7h14M7 0v14" stroke={ink} strokeWidth="2" /></svg></Tool>
      <Gap $w={22} />
      <Tool $w={14} $h={30} aria-label="移除过渡点"><svg width="14" height="14"><path d="M0 7h14" stroke={ink} strokeWidth="2" /></svg></Tool>
      <Gap $w={15} />
      <svg width="16" height="16" fill="#fff" stroke="#bbb"><circle cx="8" cy="5" r="4" /><circle cx="4" cy="11" r="4" fill="#d5f5e3" /><circle cx="12" cy="11" r="4" fill="#fbdcc2" /></svg>
      <Gap $w={4} />
      <svg width="16" height="16" fill="none" stroke="#ccc"><circle cx="8" cy="8" r="7" /><circle cx="8" cy="8" r="3" /></svg>
      <Gap $w={14} />
      <Icon name="dropper" size={16} />
      <Spacer />
      <label htmlFor="rgba">RGBA(<u>:</u>):</label>
      <Gap $w={2} />
      <Entry id="rgba" defaultValue="010000ff" />
    </Row>
  </Panel>
);

/* ---------- bottom bars ---------- */

const PaletteBar = styled.div`
  display: flex;
  align-items: center;
  height: 30px;
  padding: 2px 2px 0;
`;

const Colors = styled.div`
  flex: 1;
  display: flex;
  gap: 1px;
  height: 16px;
  margin-top: 8px;
`;

const Color = styled.button`
  flex: 1;
  background: ${p => p.$c};
`;

const StatusBar = styled.footer`
  display: flex;
  align-items: center;
  height: 46px;
  padding: 0 17px 0 3px;
  white-space: nowrap;
`;

const Stack = styled.div`
  display: flex;
  flex-direction: column;
  line-height: 23px;
  text-align: ${p => p.$align || 'left'};
  width: ${p => (p.$w ? `${p.$w}px` : 'auto')};
`;

const StyleChip = styled.button`
  width: 72px;
  height: 23px;
  font-weight: 700;
  text-align: left;
  line-height: 23px;
  border-radius: ${p => (p.$solid ? '3px' : 0)};
  background: ${p => (p.$solid ? '#000' : `linear-gradient(90deg, transparent, #000) 18px 0 / 54px 23px no-repeat, ${thinChecker}`)};

  span {
    display: inline-block;
    background: #fdfdfb;
  }
`;

const Thin = styled.span`
  align-self: flex-end;
  padding-bottom: 1px;
`;

const Watermark = styled.span`
  position: absolute;
  right: 15px;
  bottom: 3px;
  font-family: "Liberation Sans", sans-serif;
  font-size: 14px;
  color: rgba(130, 130, 130, 0.85);
  text-shadow: 1px 1px #fff;
`;

const Notes = styled.svg`
  position: absolute;
  left: 0;
  top: 0;
  pointer-events: none;
`;

const palette = `
000000 1a1a1a 333333 4d4d4d 666666 808080 999999 b3b3b3 cccccc e6e6e6 ececec f2f2f2 f9f9f9 ffffff
800000 ff0000 808000 ffff00 008000 00ff00 008080 00ffff 000080 0000ff 800080 ff00ff
2b0000 550000 800000 aa0000 d40000 ff0000 ff2a2a ff5555 ff8080 ffaaaa ffd5d5
280b0b 501616 782121 a02c2c c83737 d35f5f de8787 e9afaf f4d7d7
241c1c 483737 6c5353 916f6f ac9393 c8b7b7 e3dbdb
2b1100 552200 803300 aa4400 d45500 ff6600 ff7f2a ff9955 ffb380 ffccaa ffe6d5
28170b 502d16 784421 a05a2c c87137 d38d5f deaa87 e9c6af f4e3d7
241f1c 483e37 6c5d53 917c6f ac9d93 c8beb7 e3dedb
2b2200 554400 806600 aa8800 d4aa00 ffcc00 ffd42a ffdd55 ffe680 ffeeaa fff6d5
28220b 504416 786721 a0892c c8ab37 d3bc5f decd87 e9ddaf f4eed7
24221c 484537 6c6753 918a6f aca793 c8c4b7 e3e2db
222b00 445500 668000 88aa00 aad400 ccff00 d4ff2a ddff55 e5ff80 eeffaa f6ffd5
22280b 445016 677821 89a02c abc837 bcd35f cdde87 dde9af eef4d7
22241c 454837 676c53 8a916f a7ac93 c4c8b7 e2e3db
112b00 225500 338000 44aa00 55d400 66ff00 7fff2a 99ff55 b3ff80 ccffaa
`.trim().split(/\s+/);

const Palette = () => (
  <PaletteBar>
    <Colors>
      <Color $c="linear-gradient(to top right, transparent 46%, #801515 46% 54%, transparent 54%), linear-gradient(to bottom right, transparent 46%, #801515 46% 54%, transparent 54%)" aria-label="无" />
      {palette.map((c, i) => <Color key={i} $c={`#${c}`} aria-label={c} />)}
    </Colors>
    <Gap $w={21} />
    <svg width="12" height="8"><path d="M0 8l6-6 6 6" {...s(2)} /></svg>
    <Gap $w={19} />
    <svg width="12" height="8"><path d="M0 0l6 6 6-6" {...s(2)} /></svg>
    <Gap $w={10} />
    <Tool $w={19} $h={28} $framed aria-label="调色板菜单">
      <svg width="14" height="14"><path d="M0 2h14M0 7h14M0 12h14" {...s(2)} /></svg>
    </Tool>
  </PaletteBar>
);

const Status = () => (
  <StatusBar>
    <Stack $w={56}><span>填充:</span><span>描边:</span></Stack>
    <Stack>
      <StyleChip><span>线</span></StyleChip>
      <StyleChip $solid aria-label="描边颜色" />
    </Stack>
    <Gap $w={6} />
    <Thin>0.330</Thin>
    <label htmlFor="opacity-o">O:</label>
    <Gap $w={2} />
    <Spin id="opacity-o" value="100" w={74} h={46} pad={7} high />
    <Gap $w={13} />
    <Swatch $w={3} $h={23} $bg="#729fcf" />
    <Gap $w={7} />
    <span>图层 1</span>
    <Gap $w={19} />
    <svg width="16" height="16" fill="none" stroke={ink} strokeWidth="2"><circle cx="8" cy="10" r="5" /><circle cx="8" cy="9" r="1" /><path d="M1 6q7-2 14 0M8 1v3" /></svg>
    <Gap $w={22} />
    <Icon name="unlocked" size={16} />
    <Gap $w={9} />
    <VLine $m="5px 0" />
    <Gap $w={6} />
    <span>线性渐变<b>结束</b> 已选定 从 3 个渐变控制柄中 在 1 个已选对象上</span>
    <Spacer />
    <VLine $m="0" />
    <Gap $w={10} />
    <Stack><span>X:</span><span>Y:</span></Stack>
    <Stack $w={70} $align="right"><span>353.28</span><span>76.89</span></Stack>
    <Gap $w={8} />
    <label htmlFor="zoom">缩放:</label>
    <Spin id="zoom" value="105%" w={112} h={46} pad={10} step={22} />
    <Gap $w={9} />
    <label htmlFor="rotate">旋转:</label>
    <Spin id="rotate" value="0.00°" w={122} h={46} pad={19} step={22} />
  </StatusBar>
);

const Defs = () => (
  <defs>
    <linearGradient id="diag" x2="1" y2="1"><stop stopColor={red} /><stop offset="0.85" stopColor="#5a1f20" /><stop offset="0.86" stopColor={ink} /></linearGradient>
    <radialGradient id="meshglow"><stop stopColor={red} /><stop offset="0.3" stopColor={red} /><stop offset="1" stopColor={red} stopOpacity="0.1" /></radialGradient>
    <linearGradient id="fade" x2="0" y2="1"><stop stopColor="#000" /><stop offset="0.5" stopColor="#000" stopOpacity="0" /></linearGradient>
    <linearGradient id="triRed" gradientUnits="userSpaceOnUse" x1="97" y1="0" x2="291" y2="0"><stop stopColor="#000" /><stop offset="1" stopColor="red" /></linearGradient>
    <linearGradient id="triWhite" gradientUnits="userSpaceOnUse" x1="193" y1="106" x2="97" y2="274"><stop stopColor="#000" /><stop offset="1" stopColor="#fff" /></linearGradient>
  </defs>
);

const App = () => (
  <>
    <GlobalStyle />
    <Window>
      <Title />
      <MenuBar>
        {menus.map(([name, key]) => <button key={name}>{name}(<u>{key}</u>)</button>)}
      </MenuBar>
      <Controls />
      <Main>
        <Toolbox>
          {toolGroups.map((group, i) => (
            <React.Fragment key={i}>
              {i > 0 && <Rule />}
              {group.map(n => <Tool key={n} $w={40} $h={40} $on={n === 'gradient'} aria-label={n}><Icon name={n} /></Tool>)}
            </React.Fragment>
          ))}
        </Toolbox>
        <Canvas />
        <Grip><svg width="4" height="14" fill={ink}><circle cx="2" cy="2" r="2" /><circle cx="2" cy="7" r="2" /><circle cx="2" cy="12" r="2" /></svg></Grip>
        <Dock>
          <DockTabs>
            <DockTab $w={172} $on>
              <Icon name="fillStroke" size={16} />
              <span>填充与描边(F)</span>
              <svg width="8" height="8"><path d="M0 0l8 8M8 0L0 8" stroke="#8a8d8d" strokeWidth="2" /></svg>
              <Gap $w={2} />
            </DockTab>
            <DockTab $w={73} aria-label="文本"><Icon name="fonts" size={16} /></DockTab>
            <DockTab $w={55} aria-label="对齐"><Icon name="align" size={16} /></DockTab>
            <DockTab $w={71} aria-label="导出"><Icon name="docExport" size={16} /></DockTab>
            <Spacer />
            <DockTab $w={30} $pale aria-label="更多">
              <svg width="12" height="8"><path d="M0 1l6 6 6-6" {...s(2, { stroke: '#8a8d8d' })} /></svg>
            </DockTab>
          </DockTabs>
          <FillPanel />
          <Row $h={37} $mt={3} $pad="0 3px">
            <Spacer />
            <label htmlFor="blend">混合模式:</label>
            <Choice id="blend" value="正常" w={112} h={37} pad={11} />
          </Row>
          <Scale $mt={3}>
            <label htmlFor="blur">模糊(%)</label>
            <Spin id="blur" value="0.0" w={88} h={30} pad={7} low bare />
          </Scale>
          <Scale $mt={4} $full>
            <label htmlFor="opacity">不透明度(%)</label>
            <Spin id="opacity" value="100.0" w={88} h={30} pad={7} high bare />
          </Scale>
        </Dock>
        <Commands>
          {commandGroups.map((group, i) => (
            <React.Fragment key={i}>
              {i > 0 && <CommandRule />}
              {group.map(n => <Tool key={n} $w={44} $h={43} aria-label={n}><Icon name={n} /></Tool>)}
            </React.Fragment>
          ))}
          <Spacer />
          <Tool $w={44} $h={16} aria-label="展开"><svg width="6" height="12"><path d="M0 0l6 6-6 6z" fill={ink} /></svg></Tool>
        </Commands>
      </Main>
      <Palette />
      <Status />
      <Notes width="2200" height="700">
        <Defs />
        <rect x="2074" y="323" width="114" height="116" fill="none" stroke={note} strokeWidth="7" />
        <path d="M920 569L2068 403v-4l18 6-16 9-2-2L921 570z" fill={note} />
      </Notes>
      <Watermark>CSDN @zzzzzz_bu</Watermark>
    </Window>
  </>
);

export default App;
